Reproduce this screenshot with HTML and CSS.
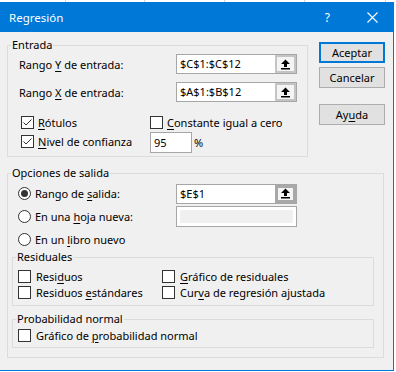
FILE: index.html
```html
<!DOCTYPE html>
<html lang="es">
<head>
    <meta charset="UTF-8">
    <title>Regresión</title>
    <link rel="stylesheet" href="styles.css">
</head>
<body>
    <div class="window">
        <div class="titlebar">
            <span class="title">Regresión</span>
            <span class="help">?</span>
            <svg class="close" width="11" height="11" viewBox="0 0 11 11">
                <path d="M0.5 0.5 L10.5 10.5 M10.5 0.5 L0.5 10.5" stroke="#fff" stroke-width="1.1" fill="none"/>
            </svg>
        </div>

        <div class="client">
            <div class="top">
                <!-- Entrada -->
                <div class="group entrada">
                    <span class="caption">Entrada</span>
                    <div class="field">
                        <span class="field-label">Rango <u>Y</u> de entrada:</span>
                        <div class="refedit">
                            <span class="ref-text">$C$1:$C$12</span>
                            <span class="ref-btn">
                                <svg width="11" height="11" viewBox="0 0 11 11"><path d="M5.5 0.5 L10 5 L7 5 L7 8 L4 8 L4 5 L1 5 Z M1 9 L10 9 L10 10.5 L1 10.5 Z" fill="#000"/></svg>
                            </span>
                        </div>
                    </div>
                    <div class="field">
                        <span class="field-label">Rango <u>X</u> de entrada:</span>
                        <div class="refedit">
                            <span class="ref-text">$A$1:$B$12</span>
                            <span class="ref-btn">
                                <svg width="11" height="11" viewBox="0 0 11 11"><path d="M5.5 0.5 L10 5 L7 5 L7 8 L4 8 L4 5 L1 5 Z M1 9 L10 9 L10 10.5 L1 10.5 Z" fill="#000"/></svg>
                            </span>
                        </div>
                    </div>
                    <div class="entrada-checks">
                        <label class="check first">
                            <span class="box"><svg width="11" height="11" viewBox="0 0 11 11"><path d="M1.5 5.5 L4 8 L9.5 2.5" stroke="#333" stroke-width="1" fill="none"/></svg></span>
                            <span><u>R</u>ótulos</span>
                        </label>
                        <label class="check"><span class="box"></span><span><u>C</u>onstante igual a cero</span></label>
                        <label class="check first">
                            <span class="box"><svg width="11" height="11" viewBox="0 0 11 11"><path d="M1.5 5.5 L4 8 L9.5 2.5" stroke="#333" stroke-width="1" fill="none"/></svg></span>
                            <span><u>N</u>ivel de confianza</span>
                        </label>
                        <div class="level">
                            <span class="textbox small">95</span>
                            <span class="percent">%</span>
                        </div>
                    </div>
                </div>

                <div class="buttons">
                    <span class="btn btn-default">Aceptar</span>
                    <span class="btn">Cancelar</span>
                    <span class="btn btn-help">Ay<u>u</u>da</span>
                </div>
            </div>

            <!-- Opciones de salida -->
            <div class="group salida">
                <span class="caption">Opciones de salida</span>
                <div class="radio-row">
                    <label class="radio-label"><span class="radio selected"></span><span>Rango de <u>s</u>alida:</span></label>
                    <div class="refedit active">
                        <span class="ref-text">$E$1</span>
                        <span class="ref-btn">
                            <svg width="11" height="11" viewBox="0 0 11 11"><path d="M5.5 0.5 L10 5 L7 5 L7 8 L4 8 L4 5 L1 5 Z M1 9 L10 9 L10 10.5 L1 10.5 Z" fill="#000"/></svg>
                        </span>
                    </div>
                </div>
                <div class="radio-row second">
                    <label class="radio-label"><span class="radio"></span><span>En una <u>h</u>oja nueva:</span></label>
                    <div class="textbox disabled"></div>
                </div>
                <div class="radio-row third">
                    <label class="radio-label"><span class="radio"></span><span>En un <u>l</u>ibro nuevo</span></label>
                </div>

                <div class="group inner residuales">
                    <span class="caption">Residuales</span>
                    <div class="two-cols">
                        <label class="check"><span class="box"></span><span>Resi<u>d</u>uos</span></label>
                        <label class="check"><span class="box"></span><span><u>G</u>ráfico de residuales</span></label>
                        <label class="check"><span class="box"></span><span>Residuos <u>e</u>stándares</span></label>
                        <label class="check"><span class="box"></span><span>Cur<u>v</u>a de regresión ajustada</span></label>
                    </div>
                </div>

                <div class="group inner probabilidad">
                    <span class="caption">Probabilidad normal</span>
                    <label class="check"><span class="box"></span><span>Gráfico de <u>p</u>robabilidad normal</span></label>
                </div>
            </div>
        </div>
    </div>
</body>
</html>
```

FILE: styles.css
```css
:root {
    --accent: #0078d7;
    --dialog-bg: #f0f0f0;
    --group-line: #dcdcdc;
    --field-line: #a6a6a6;
    --btn-bg: #e1e1e1;
    --btn-line: #adadad;
}

* {
    box-sizing: border-box;
}

body {
    margin: 0;
    font-family: "Noto Sans", "DejaVu Sans", sans-serif;
    font-size: 11px;
    color: #000;
    overflow: hidden;
    background:
        linear-gradient(#d4d4d4, #d4d4d4) 65px 0 / 1px 100% no-repeat,
        linear-gradient(#d4d4d4, #d4d4d4) 144px 0 / 1px 100% no-repeat,
        linear-gradient(#d4d4d4, #d4d4d4) 224px 0 / 1px 100% no-repeat,
        linear-gradient(#d4d4d4, #d4d4d4) 304px 0 / 1px 100% no-repeat,
        linear-gradient(#d4d4d4, #d4d4d4) 385px 0 / 1px 100% no-repeat,
        #fff;
}

u {
    text-decoration-thickness: 1px;
    text-underline-offset: 2px;
}

/* Window frame */
.window {
    width: 395px;
    height: 369px;
    margin: 2px 0 0 -1px;
    border: 1px solid var(--accent);
    border-top: 0;
    background: var(--dialog-bg);
}

.titlebar {
    height: 30px;
    background: var(--accent);
    color: #fff;
    display: flex;
    align-items: center;
}

.title {
    margin-left: 9px;
    font-size: 11.5px;
}

.help {
    margin-left: auto;
    font-size: 12px;
}

.close {
    margin: 0 15px 0 37px;
}

.client {
    padding: 10px 0 0 7px;
}

.top {
    display: flex;
    align-items: flex-start;
}

/* Group boxes */
.group {
    position: relative;
    border: 1px solid var(--group-line);
}

.caption {
    position: absolute;
    top: -8px;
    left: 3px;
    padding: 0 1px;
    line-height: 14px;
    background: var(--dialog-bg);
    white-space: nowrap;
}

.entrada {
    width: 301px;
    height: 112px;
    margin-top: 3px;
    padding: 8px 0 0 11px;
}

.field {
    display: flex;
    align-items: center;
    height: 20px;
}

.field + .field {
    margin-top: 8px;
}

.field-label {
    width: 157px;
    white-space: nowrap;
}

/* Reference edit with collapse button */
.refedit {
    width: 121px;
    height: 20px;
    display: flex;
    border: 1px solid var(--field-line);
    background: #fff;
}

.ref-text {
    flex: 1;
    padding-left: 3px;
    line-height: 18px;
}

.ref-btn {
    width: 21px;
    height: 18px;
    display: flex;
    align-items: center;
    justify-content: center;
    background: #f4f4f4;
    border: 2px solid #c4c4c4;
}

.refedit.active .ref-btn {
    border-color: #a8a8a8;
    border-width: 3px;
}

.textbox {
    display: block;
    height: 21px;
    border: 1px solid var(--field-line);
    background: #fff;
}

.textbox.small {
    width: 42px;
    padding-left: 3px;
    line-height: 19px;
}

.textbox.disabled {
    width: 121px;
    background: var(--dialog-bg);
    box-shadow: inset 0 0 0 3px #fff;
}

/* Checkboxes */
.check {
    display: flex;
    align-items: center;
    height: 16px;
    white-space: nowrap;
}

.box {
    width: 13px;
    height: 13px;
    margin-right: 4px;
    border: 1px solid #333;
    background: #fff;
    display: flex;
}

.entrada-checks {
    margin-top: 12px;
    display: grid;
    grid-template-columns: 131px auto;
    align-items: center;
}

.check.first {
    margin-left: 2px;
}

.level {
    display: flex;
    align-items: center;
    margin-top: 2px;
}

.percent {
    margin-left: 2px;
}

/* Buttons */
.buttons {
    margin-left: 11px;
    display: flex;
    flex-direction: column;
}

.btn {
    width: 66px;
    height: 21px;
    line-height: 19px;
    text-align: center;
    background: var(--btn-bg);
    border: 1px solid var(--btn-line);
}

.btn + .btn {
    margin-top: 4px;
}

.btn-default {
    border-color: var(--accent);
    box-shadow: inset 0 0 0 1px var(--accent);
}

.btn.btn-help {
    margin-top: 16px;
}

/* Opciones de salida */
.salida {
    width: 377px;
    height: 185px;
    margin-top: 16px;
    padding: 9px 0 0 4px;
}

.radio-row {
    display: flex;
    align-items: center;
    height: 21px;
    padding-left: 6px;
}

.radio-row.second {
    margin-top: 2px;
}

.radio-row.third {
    margin-top: 4px;
    height: 16px;
}

.radio-label {
    width: 158px;
    display: flex;
    align-items: center;
    white-space: nowrap;
}

.radio {
    width: 13px;
    height: 13px;
    margin-right: 4px;
    border: 1px solid #333;
    border-radius: 50%;
    background: #fff;
    display: flex;
    align-items: center;
    justify-content: center;
}

.radio.selected::after {
    content: '';
    width: 7px;
    height: 7px;
    border-radius: 50%;
    background: #333;
}

.inner {
    width: 362px;
    padding-left: 5px;
}

.inner .box {
    margin-right: 5px;
}

.residuales {
    height: 49px;
    margin-top: 10px;
    padding-top: 10px;
}

.two-cols {
    display: grid;
    grid-template-columns: 144px auto;
}

.probabilidad {
    height: 29px;
    margin-top: 13px;
    padding-top: 7px;
}
```
